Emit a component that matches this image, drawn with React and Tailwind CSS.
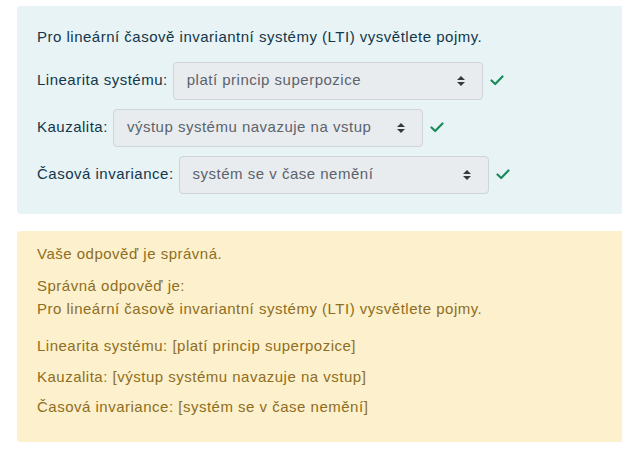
import React from "react";

const Arrow = () => (
  <svg width="8" height="10" viewBox="0 0 4 5" className="shrink-0">
    <path d="M2 0L0 2h4zm0 5L0 3h4z" fill="#343a40" />
  </svg>
);

const Check = () => (
  <svg width="14" height="11" viewBox="0 0 14 11" className="shrink-0">
    <path d="M1.5 5.5 L5.2 9 L12.5 1.5" fill="none" stroke="#1a8a5c" strokeWidth="2.2" strokeLinecap="round" strokeLinejoin="round" />
  </svg>
);

const Row = ({ label, value, mt }) => (
  <div className={`flex items-center ${mt}`}>
    <span>{label}</span>
    <div className="ml-[5px] flex h-[38px] w-[310px] items-center justify-between rounded-[4px] border border-[#ced4da] bg-[#e9ecef] pl-[13px] pr-[17px] text-[#5b636b]">
      <span>{value}</span>
      <Arrow />
    </div>
    <span className="ml-[7px]">
      <Check />
    </span>
  </div>
);

export default function App() {
  return (
    <div
      className="min-h-[450px] overflow-hidden bg-white pl-[17px] pt-[6px] text-[15px] leading-[22.5px] tracking-[0.5px]"
      style={{ fontFamily: '"Liberation Sans", Arial, sans-serif' }}
    >
      <div className="w-[640px] rounded-l-[4px] bg-[#e7f3f5] pb-[20px] pl-[20px] pt-[20px] text-[#13364a]">
        <div>Pro lineární časově invariantní systémy (LTI) vysvětlete pojmy.</div>
        <Row mt="mt-[13px]" label="Linearita systému:" value="platí princip superpozice" />
        <Row mt="mt-[9px]" label="Kauzalita:" value="výstup systému navazuje na vstup" />
        <Row mt="mt-[9px]" label="Časová invariance:" value="systém se v čase nemění" />
      </div>
      <div className="mt-[17px] w-[640px] rounded-l-[4px] bg-[#fdf0cc] pb-[23px] pl-[20px] pt-[12px] text-[#8d6e22]">
        <div>Vaše odpověď je správná.</div>
        <div className="mt-[10px]">Správná odpověď je:</div>
        <div>Pro lineární časově invariantní systémy (LTI) vysvětlete pojmy.</div>
        <div className="mt-[15px]">Linearita systému: [platí princip superpozice]</div>
        <div className="mt-[8px]">Kauzalita: [výstup systému navazuje na vstup]</div>
        <div className="mt-[8px]">Časová invariance: [systém se v čase nemění]</div>
      </div>
    </div>
  );
}
